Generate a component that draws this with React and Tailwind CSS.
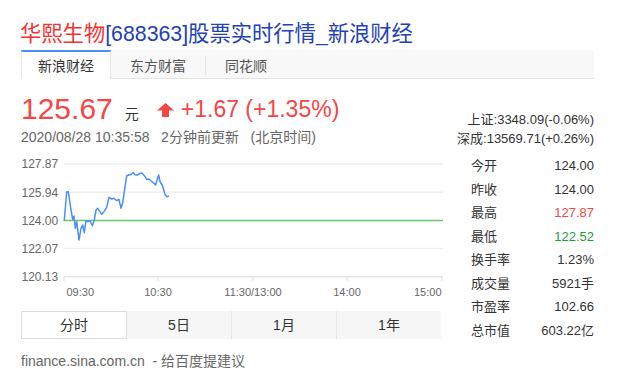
import React from "react";

const pts = [
  [64.3, 220.3], [66.7, 191.7], [68.3, 191.7], [71, 210], [72.7, 219.3], [74, 216], [75.3, 228.3],
  [76.7, 221.7], [79, 240], [81, 228.3], [82.7, 225], [84.3, 232.7], [86, 220.7], [88.3, 221.7],
  [90, 220.7], [92.3, 225.7], [94.3, 220], [96, 210], [97.7, 208.3], [100, 211.7], [101.7, 214.3],
  [104, 211.7], [106.7, 207.3], [109, 197.3], [111.7, 199], [114, 198.3], [116.7, 200.7], [119, 199.3],
  [121, 208.3], [122.7, 202.7], [126.7, 175.7], [130, 174.7], [131.7, 174], [133.3, 172.7], [135, 174.7],
  [137.3, 175], [140, 173.3], [142.3, 173.3], [144.3, 175.7], [146.7, 179.3], [149, 179], [151, 180.7],
  [153.3, 182.7], [155.7, 185], [157.3, 179], [158.7, 175], [160, 181.7], [162.3, 185], [165, 194.3],
  [166.7, 196.7], [169, 196],
];

const yLabels = ["127.87", "125.94", "124.00", "122.07", "120.13"];
const gridY = [14, 42.2, 70.4, 98.6, 126.8];
const ticks = [43, 137, 232, 326, 420.7];

const stats = [
  ["今开", "124.00", "text-[#333]"],
  ["昨收", "124.00", "text-[#333]"],
  ["最高", "127.87", "text-[#f54545]"],
  ["最低", "122.52", "text-[#1d9f3a]"],
  ["换手率", "1.23%", "text-[#333]"],
  ["成交量", "5921手", "text-[#333]"],
  ["市盈率", "102.66", "text-[#333]"],
  ["总市值", "603.22亿", "text-[#333]"],
];

function Chart() {
  const line = pts.map(([x, y]) => `${(x - 21).toFixed(1)},${(y - 150).toFixed(1)}`).join(" ");
  return (
    <svg width="422" height="149" className="block mt-[4px]">
      {gridY.map((y, i) => (
        <line key={i} x1="42.5" x2="422" y1={y} y2={y} stroke={i === 4 ? "#e6e6e6" : "#efefef"} strokeWidth="1.5" />
      ))}
      {ticks.map((x) => (
        <line key={x} x1={x} x2={x} y1="126.8" y2="131" stroke="#e0e0e0" strokeWidth="1" />
      ))}
      <line x1="42.5" x2="422" y1="70.4" y2="70.4" stroke="#6cc76c" strokeWidth="1.5" />
      <polyline points={line} fill="none" stroke="#4a8ff7" strokeWidth="1.5" strokeLinejoin="round" />
      <g fill="#666" fontSize="12" fontFamily="Liberation Sans, sans-serif">
        {yLabels.map((t, i) => (
          <text key={t} x="0.5" y={gridY[i]} dy="0.36em">{t}</text>
        ))}
      </g>
      <g fill="#666" fontSize="11" fontFamily="Liberation Sans, sans-serif">
        <text x="45.5" y="141.7" dy="0.36em">09:30</text>
        <text x="137" y="141.7" dy="0.36em" textAnchor="middle">10:30</text>
        <text x="232" y="141.7" dy="0.36em" textAnchor="middle">11:30/13:00</text>
        <text x="326" y="141.7" dy="0.36em" textAnchor="middle">14:00</text>
        <text x="420.5" y="141.7" dy="0.36em" textAnchor="end">15:00</text>
      </g>
    </svg>
  );
}

export default function App() {
  return (
    <div className="w-[631px] h-[388px] bg-white font-['Liberation_Sans','Noto_Sans_CJK_SC',sans-serif] pl-[21px] pt-[21px] overflow-hidden">
      {/* title */}
      <h1 className="text-[21.3px] leading-[26px] -ml-px text-[#2440b3] whitespace-nowrap">
        <span className="text-[#f73131]">华熙生物</span>[688363]股票实时行情_新浪财经
      </h1>

      {/* source tabs */}
      <div className="mt-[3px] w-[573px] h-[29px] flex bg-[#f8f8f8] border-b border-[#e4e4e4] text-[14px] text-[#333]">
        <div className="h-[29px] -mb-px bg-white border-t-2 border-x border-t-[#4b8cf7] border-x-[#e8e8e8] px-[16px] pt-[4px] leading-[20px]">
          新浪财经
        </div>
        <div className="px-[19px] pt-[6px] leading-[20px] text-[#555]">东方财富</div>
        <div className="w-px h-[19px] bg-[#e2e2e2] mt-[6px]" />
        <div className="px-[19px] pt-[6px] leading-[20px] text-[#555]">同花顺</div>
      </div>

      <div className="w-[573px] flex justify-between">
        {/* left side */}
        <div className="w-[422px]">
          <div className="pt-[15px] flex items-baseline text-[#f54545] whitespace-nowrap">
            <span className="text-[30px] leading-[30px]">125.67</span>
            <span className="ml-[12px] text-[14px] text-[#333]">元</span>
            <span className="ml-[18px] flex items-baseline text-[23px] leading-[23px] -translate-y-[2px]">
              <svg width="17" height="14" viewBox="0 0 17 14" className="mr-[7px] mb-[2px]">
                <path d="M8.5 0 L17 7.5 L12 7.5 L12 14 L5 14 L5 7.5 L0 7.5 Z" fill="#f54545" />
              </svg>
              +1.67 (+1.35%)
            </span>
          </div>
          <div className="mt-[3px] text-[14px] leading-[18px] text-[#666] whitespace-nowrap">
            2020/08/28 10:35:58&nbsp;&nbsp;&nbsp;2分钟前更新&nbsp;&nbsp;&nbsp;(北京时间)
          </div>

          <Chart />

          {/* period tabs */}
          <div className="mt-[12px] w-[420px] h-[28px] flex bg-[#f6f6f6] text-[14px] text-[#333]">
            <div className="flex-1 flex items-center justify-center bg-white border border-[#dedede]">分时</div>
            <div className="flex-1 flex items-center justify-center">5日</div>
            <div className="flex-1 flex items-center justify-center border-l border-[#e6e6e6]">1月</div>
            <div className="flex-1 flex items-center justify-center border-l border-[#e6e6e6]">1年</div>
          </div>

          <div className="mt-[12px] text-[14px] leading-[20px] text-[#666] whitespace-nowrap">
            finance.sina.com.cn&nbsp;&nbsp;- 给百度提建议
          </div>
        </div>

        {/* right side */}
        <div className="pt-[32px] flex flex-col items-end text-[13px] text-[#333]">
          <div className="leading-[18.6px] whitespace-nowrap">上证:3348.09(-0.06%)</div>
          <div className="leading-[18.6px] whitespace-nowrap">深成:13569.71(+0.26%)</div>
          <div className="mt-[6px] w-[123px]">
            {stats.map(([k, v, c]) => (
              <div key={k} className="h-[23.5px] flex items-center justify-between">
                <span>{k}</span>
                <span className={c}>{v}</span>
              </div>
            ))}
          </div>
        </div>
      </div>
    </div>
  );
}
